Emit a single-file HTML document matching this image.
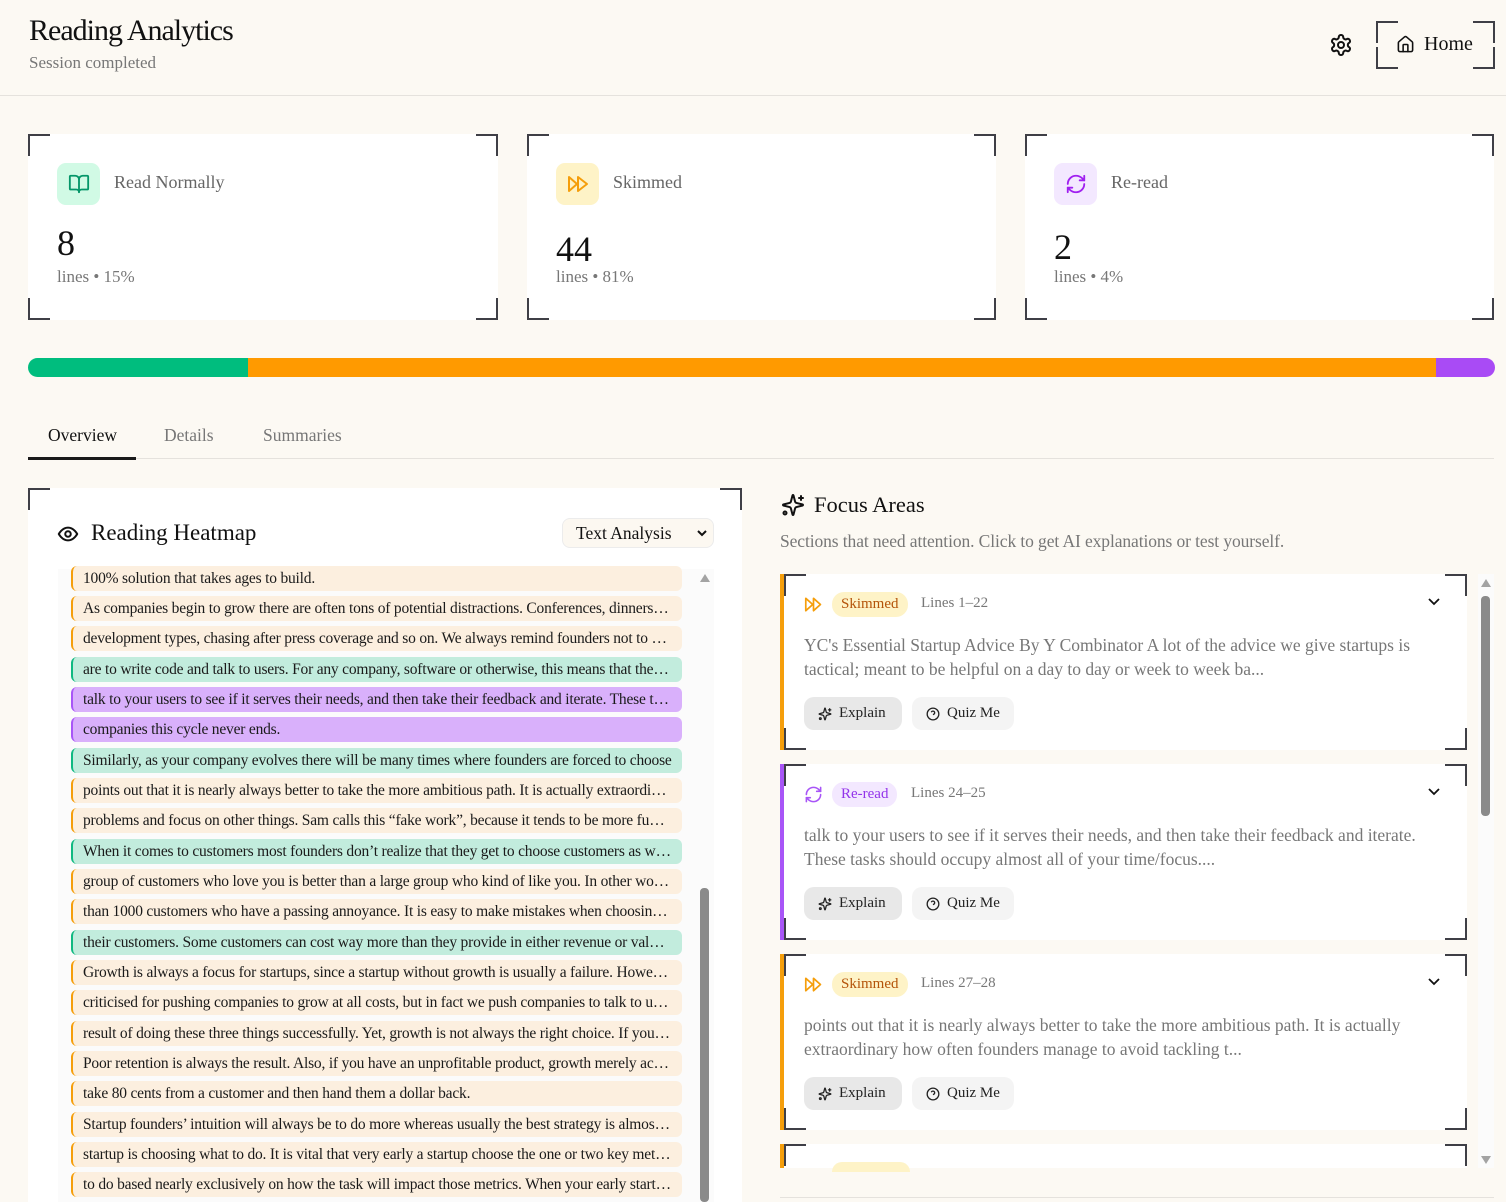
<!DOCTYPE html>
<html><head><meta charset="utf-8"><style>
*{box-sizing:border-box;margin:0;padding:0}
body{width:1506px;height:1202px;overflow:hidden;background:#fcf9f3;font-family:"Liberation Serif",serif;color:#1a1a1a;position:relative}
.abs{position:absolute}
.br{position:absolute;width:22px;height:22px;border-color:#3f3f46;border-style:solid;border-width:0}
.tl{left:0;top:0;border-left-width:2px;border-top-width:2px}
.tr{right:0;top:0;border-right-width:2px;border-top-width:2px}
.bl{left:0;bottom:0;border-left-width:2px;border-bottom-width:2px}
.brr{right:0;bottom:0;border-right-width:2px;border-bottom-width:2px}
.card{position:absolute;top:134px;height:186px;background:#fff}
.ib{position:absolute;left:29px;top:29px;width:43px;height:42px;border-radius:9px;display:flex;align-items:center;justify-content:center}
.cl{position:absolute;left:86px;top:38px;font-size:18px;color:#666}
.num{position:absolute;left:29px;top:88px;font-size:36px;color:#111}
.sub{position:absolute;left:29px;top:133px;font-size:17px;color:#777}
.row{position:absolute;left:71px;width:611px;height:25px;border-radius:6px;border-left:2px solid #f59e0b;background:#fcefdf;font-size:15.5px;line-height:25px;padding-left:10px;padding-right:10px;white-space:nowrap;overflow:hidden;text-overflow:ellipsis;color:#1a1a1a;letter-spacing:-0.2px}
.g{background:#c2ecdd;border-left-color:#10b981}
.p{background:#d9b0fb;border-left-color:#a855f7}
.fc{position:absolute;left:780px;width:687px;height:176px;background:#fff;border-left:4px solid #f59e0b}
.fc .in{position:absolute;left:20px;top:0;right:0;bottom:0}
.badge{position:absolute;left:28px;top:18px;height:25px;padding:0 9px;border-radius:12px;font-size:15px;line-height:25px}
.lines{position:absolute;top:21px;font-size:15px;color:#777}
.txt{position:absolute;left:0;top:59px;width:630px;font-size:17.5px;line-height:24px;color:#777}
.btn{position:absolute;top:123px;height:33px;border-radius:10px;font-size:15px;line-height:33px;padding-left:35px;color:#222}
.chev{position:absolute;right:27px;top:24px}
</style></head><body>

<div class="abs" style="left:29px;top:14px;font-size:30px;letter-spacing:-1px;color:#111">Reading Analytics</div>
<div class="abs" style="left:29px;top:53px;font-size:17px;color:#777">Session completed</div>
<svg class="abs" style="left:1329px;top:33px" width="24" height="24" viewBox="0 0 24 24" fill="none" stroke="#111" stroke-width="2" stroke-linecap="round" stroke-linejoin="round"><path d="M12.22 2h-.44a2 2 0 0 0-2 2v.18a2 2 0 0 1-1 1.73l-.43.25a2 2 0 0 1-2 0l-.15-.08a2 2 0 0 0-2.73.73l-.22.38a2 2 0 0 0 .73 2.73l.15.1a2 2 0 0 1 1 1.72v.51a2 2 0 0 1-1 1.740l-.15.09a2 2 0 0 0-.73 2.73l.22.38a2 2 0 0 0 2.73.73l.15-.08a2 2 0 0 1 2 0l.43.25a2 2 0 0 1 1 1.73V20a2 2 0 0 0 2 2h.44a2 2 0 0 0 2-2v-.18a2 2 0 0 1 1-1.73l.43-.25a2 2 0 0 1 2 0l.15.08a2 2 0 0 0 2.73-.73l.22-.39a2 2 0 0 0-.73-2.73l-.15-.08a2 2 0 0 1-1-1.74v-.5a2 2 0 0 1 1-1.74l.15-.09a2 2 0 0 0 .73-2.73l-.22-.38a2 2 0 0 0-2.73-.73l-.15.08a2 2 0 0 1-2 0l-.43-.25a2 2 0 0 1-1-1.73V4a2 2 0 0 0-2-2z"/><circle cx="12" cy="12" r="3"/></svg>
<div class="abs" style="left:1376px;top:21px;width:119px;height:48px">
<div class="br tl"></div><div class="br tr"></div><div class="br bl"></div><div class="br brr"></div>
<svg class="abs" style="left:20px;top:14px" width="19" height="19" viewBox="0 0 24 24" fill="none" stroke="#111" stroke-width="2" stroke-linecap="round" stroke-linejoin="round"><path d="M15 21v-8a1 1 0 0 0-1-1h-4a1 1 0 0 0-1 1v8"/><path d="M3 10a2 2 0 0 1 .709-1.528l7-5.999a2 2 0 0 1 2.582 0l7 5.999A2 2 0 0 1 21 10v9a2 2 0 0 1-2 2H5a2 2 0 0 1-2-2z"/></svg>
<div class="abs" style="left:48px;top:12px;font-size:20px;color:#111">Home</div>
</div>
<div class="abs" style="left:0;top:95px;width:1506px;height:1px;background:#e5e2dd"></div>

<div class="card" style="left:28px;width:470px"><div class="br tl"></div><div class="br tr"></div><div class="br bl"></div><div class="br brr"></div>
<div class="ib" style="background:#d1fae5"><svg width="22" height="22" viewBox="0 0 24 24" fill="none" stroke="#059669" stroke-width="2" stroke-linecap="round" stroke-linejoin="round"><path d="M12 7v14"/><path d="M3 18a1 1 0 0 1-1-1V4a1 1 0 0 1 1-1h5a4 4 0 0 1 4 4 4 4 0 0 1 4-4h5a1 1 0 0 1 1 1v13a1 1 0 0 1-1 1h-6a3 3 0 0 0-3 3 3 3 0 0 0-3-3z"/></svg></div>
<div class="cl">Read Normally</div><div class="num">8</div><div class="sub">lines • 15%</div></div>

<div class="card" style="left:527px;width:469px"><div class="br tl"></div><div class="br tr"></div><div class="br bl"></div><div class="br brr"></div>
<div class="ib" style="background:#fef3c7"><svg width="24" height="24" viewBox="0 0 24 24" fill="none" stroke="#f59e0b" stroke-width="2" stroke-linejoin="round"><path d="M3 5l8 7-8 7z"/><path d="M12 5l9 7-9 7z"/></svg></div>
<div class="cl">Skimmed</div><div class="num" style="top:94px">44</div><div class="sub">lines • 81%</div></div>

<div class="card" style="left:1025px;width:469px"><div class="br tl"></div><div class="br tr"></div><div class="br bl"></div><div class="br brr"></div>
<div class="ib" style="background:#f3e8ff"><svg width="22" height="22" viewBox="0 0 24 24" fill="none" stroke="#a020f0" stroke-width="2" stroke-linecap="round" stroke-linejoin="round"><path d="M3 12a9 9 0 0 1 9-9 9.75 9.75 0 0 1 6.74 2.74L21 8"/><path d="M21 3v5h-5"/><path d="M21 12a9 9 0 0 1-9 9 9.75 9.75 0 0 1-6.74-2.74L3 16"/><path d="M8 16H3v5"/></svg></div>
<div class="cl">Re-read</div><div class="num" style="top:92px">2</div><div class="sub">lines • 4%</div></div>

<div class="abs" style="left:28px;top:358px;width:1467px;height:19px;border-radius:10px;overflow:hidden;display:flex">
<div style="width:220px;background:#00bd7e"></div><div style="width:1188px;background:#ff9a00"></div><div style="flex:1;background:#a94bf5"></div></div>

<div class="abs" style="left:28px;top:458px;width:1466px;height:1px;background:#e5e2dd"></div>
<div class="abs" style="left:28px;top:457px;width:108px;height:3px;background:#1a1a1a"></div>
<div class="abs" style="left:48px;top:425px;font-size:17.5px;color:#111">Overview</div>
<div class="abs" style="left:164px;top:425px;font-size:17.5px;color:#777">Details</div>
<div class="abs" style="left:263px;top:425px;font-size:17.5px;color:#777">Summaries</div>

<div class="abs" style="left:28px;top:488px;width:714px;height:714px;background:#fff">
<div class="br tl"></div><div class="br tr"></div>
<svg class="abs" style="left:29px;top:35px" width="22" height="22" viewBox="0 0 24 24" fill="none" stroke="#111" stroke-width="2.2"><path d="M2 12s3.5-7 10-7 10 7 10 7-3.5 7-10 7S2 12 2 12z"/><circle cx="12" cy="12" r="3"/></svg>
<div class="abs" style="left:63px;top:32px;font-size:23px;color:#111">Reading Heatmap</div>
<div class="abs" style="left:534px;top:30px;width:152px;height:30px;border:1px solid #ececec;border-radius:8px;background:#fcf8f1;font-size:17.5px;line-height:28px;padding-left:13px;color:#111">Text Analysis
<svg class="abs" style="right:6px;top:10px" width="10" height="8" viewBox="0 0 10 8"><path d="M1 2l4 4 4-4" stroke="#111" stroke-width="2" fill="none"/></svg></div>
<div class="abs" style="left:30px;top:81px;width:656px;height:633px;background:#fbfbfb"></div>
<div class="abs" style="left:672px;top:400px;width:9px;height:314px;background:#8a8a8a;border-radius:4px"></div>
<svg class="abs" style="left:672px;top:86px" width="10" height="8"><path d="M0 8L5 0 10 8z" fill="#a3a3a3"/></svg>
</div>

<div class="row" style="top:566px">100% solution that takes ages to build.</div>
<div class="row" style="top:596px">As companies begin to grow there are often tons of potential distractions. Conferences, dinners, networking</div>
<div class="row" style="top:626px">development types, chasing after press coverage and so on. We always remind founders not to get distracted</div>
<div class="row g" style="top:657px">are to write code and talk to users. For any company, software or otherwise, this means that the founders</div>
<div class="row p" style="top:687px">talk to your users to see if it serves their needs, and then take their feedback and iterate. These tasks</div>
<div class="row p" style="top:717px">companies this cycle never ends.</div>
<div class="row g" style="top:748px">Similarly, as your company evolves there will be many times where founders are forced to choose</div>
<div class="row" style="top:778px">points out that it is nearly always better to take the more ambitious path. It is actually extraordinary how</div>
<div class="row" style="top:808px">problems and focus on other things. Sam calls this “fake work”, because it tends to be more fun than</div>
<div class="row g" style="top:839px">When it comes to customers most founders don’t realize that they get to choose customers as well as</div>
<div class="row" style="top:869px">group of customers who love you is better than a large group who kind of like you. In other words, it</div>
<div class="row" style="top:899px">than 1000 customers who have a passing annoyance. It is easy to make mistakes when choosing your</div>
<div class="row g" style="top:930px">their customers. Some customers can cost way more than they provide in either revenue or value to</div>
<div class="row" style="top:960px">Growth is always a focus for startups, since a startup without growth is usually a failure. However growth</div>
<div class="row" style="top:990px">criticised for pushing companies to grow at all costs, but in fact we push companies to talk to users first</div>
<div class="row" style="top:1021px">result of doing these three things successfully. Yet, growth is not always the right choice. If you have a</div>
<div class="row" style="top:1051px">Poor retention is always the result. Also, if you have an unprofitable product, growth merely accelerates</div>
<div class="row" style="top:1081px">take 80 cents from a customer and then hand them a dollar back.</div>
<div class="row" style="top:1112px">Startup founders’ intuition will always be to do more whereas usually the best strategy is almost always</div>
<div class="row" style="top:1142px">startup is choosing what to do. It is vital that very early a startup choose the one or two key metrics it</div>
<div class="row" style="top:1172px">to do based nearly exclusively on how the task will impact those metrics. When your early startup is</div>

<svg class="abs" style="left:781px;top:493px" width="24" height="24" viewBox="0 0 24 24" fill="none" stroke="#111" stroke-width="2" stroke-linecap="round" stroke-linejoin="round"><path d="M9.937 15.5A2 2 0 0 0 8.5 14.063l-6.135-1.582a.5.5 0 0 1 0-.962L8.5 9.936A2 2 0 0 0 9.937 8.5l1.582-6.135a.5.5 0 0 1 .963 0L14.063 8.5A2 2 0 0 0 15.5 9.937l6.135 1.581a.5.5 0 0 1 0 .964L15.5 14.063a2 2 0 0 0-1.437 1.437l-1.582 6.135a.5.5 0 0 1-.963 0z"/><path d="M20 3v4"/><path d="M22 5h-4"/><circle cx="4" cy="20" r="1.5"/></svg>
<div class="abs" style="left:814px;top:492px;font-size:22.5px;color:#111">Focus Areas</div>
<div class="abs" style="left:780px;top:531px;font-size:17.5px;color:#777;letter-spacing:-0.1px">Sections that need attention. Click to get AI explanations or test yourself.</div>

<div class="abs" style="left:780px;top:574px;width:714px;height:594px;overflow:hidden">
<div class="abs" style="left:698px;top:0;width:16px;height:594px;background:#fbfbfb"></div>
<svg class="abs" style="left:701px;top:5px" width="10" height="8"><path d="M0 8L5 0 10 8z" fill="#a3a3a3"/></svg>
<svg class="abs" style="left:701px;top:582px" width="10" height="8"><path d="M0 0L5 8 10 0z" fill="#a3a3a3"/></svg>
<div class="abs" style="left:701px;top:22px;width:9px;height:220px;background:#8a8a8a;border-radius:4px"></div>
</div>

<div class="fc" style="top:574px"><div class="br tl"></div><div class="br tr"></div><div class="br bl"></div><div class="br brr"></div><div class="in">
<svg class="abs" style="left:0;top:22px" width="19" height="17" viewBox="0 0 24 22" fill="none" stroke="#f59e0b" stroke-width="2.2" stroke-linejoin="round"><path d="M2 3l9 8-9 8z"/><path d="M12 3l9 8-9 8z"/></svg>
<div class="badge" style="background:#fef3c7;color:#b45309">Skimmed</div><div class="lines" style="left:117px">Lines 1–22</div>
<svg class="chev" width="12" height="8" viewBox="0 0 12 8"><path d="M1 1l5 5 5-5" stroke="#111" stroke-width="1.8" fill="none"/></svg>
<div class="txt">YC's Essential Startup Advice By Y Combinator A lot of the advice we give startups is tactical; meant to be helpful on a day to day or week to week ba...</div>
<div class="btn" style="left:0;width:98px;background:#e8e8e8">Explain</div><div class="btn" style="left:108px;width:102px;background:#f4f4f4">Quiz Me</div>
<svg class="abs" style="left:14px;top:133px" width="14" height="14" viewBox="0 0 24 24" fill="none" stroke="#222" stroke-width="2.2" stroke-linecap="round" stroke-linejoin="round"><path d="M9.937 15.5A2 2 0 0 0 8.5 14.063l-6.135-1.582a.5.5 0 0 1 0-.962L8.5 9.936A2 2 0 0 0 9.937 8.5l1.582-6.135a.5.5 0 0 1 .963 0L14.063 8.5A2 2 0 0 0 15.5 9.937l6.135 1.581a.5.5 0 0 1 0 .964L15.5 14.063a2 2 0 0 0-1.437 1.437l-1.582 6.135a.5.5 0 0 1-.963 0z"/><path d="M20 3v4"/><path d="M22 5h-4"/><circle cx="4" cy="20" r="1.5"/></svg>
<svg class="abs" style="left:122px;top:133px" width="14" height="14" viewBox="0 0 24 24" fill="none" stroke="#222" stroke-width="2.2"><circle cx="12" cy="12" r="10"/><path d="M9.1 9a3 3 0 0 1 5.8 1c0 2-3 3-3 3"/><path d="M12 17h.01"/></svg>
</div></div>

<div class="fc" style="top:764px;border-left-color:#a855f7"><div class="br tl"></div><div class="br tr"></div><div class="br bl"></div><div class="br brr"></div><div class="in">
<svg class="abs" style="left:0;top:21px" width="19" height="19" viewBox="0 0 24 24" fill="none" stroke="#a855f7" stroke-width="2" stroke-linecap="round" stroke-linejoin="round"><path d="M3 12a9 9 0 0 1 9-9 9.75 9.75 0 0 1 6.74 2.74L21 8"/><path d="M21 3v5h-5"/><path d="M21 12a9 9 0 0 1-9 9 9.75 9.75 0 0 1-6.74-2.74L3 16"/><path d="M8 16H3v5"/></svg>
<div class="badge" style="background:#f3e8ff;color:#9333ea">Re-read</div><div class="lines" style="left:107px">Lines 24–25</div>
<svg class="chev" width="12" height="8" viewBox="0 0 12 8"><path d="M1 1l5 5 5-5" stroke="#111" stroke-width="1.8" fill="none"/></svg>
<div class="txt" style="width:650px">talk to your users to see if it serves their needs, and then take their feedback and iterate. These tasks should occupy almost all of your time/focus....</div>
<div class="btn" style="left:0;width:98px;background:#e8e8e8">Explain</div><div class="btn" style="left:108px;width:102px;background:#f4f4f4">Quiz Me</div>
<svg class="abs" style="left:14px;top:133px" width="14" height="14" viewBox="0 0 24 24" fill="none" stroke="#222" stroke-width="2.2" stroke-linecap="round" stroke-linejoin="round"><path d="M9.937 15.5A2 2 0 0 0 8.5 14.063l-6.135-1.582a.5.5 0 0 1 0-.962L8.5 9.936A2 2 0 0 0 9.937 8.5l1.582-6.135a.5.5 0 0 1 .963 0L14.063 8.5A2 2 0 0 0 15.5 9.937l6.135 1.581a.5.5 0 0 1 0 .964L15.5 14.063a2 2 0 0 0-1.437 1.437l-1.582 6.135a.5.5 0 0 1-.963 0z"/><path d="M20 3v4"/><path d="M22 5h-4"/><circle cx="4" cy="20" r="1.5"/></svg>
<svg class="abs" style="left:122px;top:133px" width="14" height="14" viewBox="0 0 24 24" fill="none" stroke="#222" stroke-width="2.2"><circle cx="12" cy="12" r="10"/><path d="M9.1 9a3 3 0 0 1 5.8 1c0 2-3 3-3 3"/><path d="M12 17h.01"/></svg>
</div></div>

<div class="fc" style="top:954px"><div class="br tl"></div><div class="br tr"></div><div class="br bl"></div><div class="br brr"></div><div class="in">
<svg class="abs" style="left:0;top:22px" width="19" height="17" viewBox="0 0 24 22" fill="none" stroke="#f59e0b" stroke-width="2.2" stroke-linejoin="round"><path d="M2 3l9 8-9 8z"/><path d="M12 3l9 8-9 8z"/></svg>
<div class="badge" style="background:#fef3c7;color:#b45309">Skimmed</div><div class="lines" style="left:117px">Lines 27–28</div>
<svg class="chev" width="12" height="8" viewBox="0 0 12 8"><path d="M1 1l5 5 5-5" stroke="#111" stroke-width="1.8" fill="none"/></svg>
<div class="txt">points out that it is nearly always better to take the more ambitious path. It is actually extraordinary how often founders manage to avoid tackling t...</div>
<div class="btn" style="left:0;width:98px;background:#e8e8e8">Explain</div><div class="btn" style="left:108px;width:102px;background:#f4f4f4">Quiz Me</div>
<svg class="abs" style="left:14px;top:133px" width="14" height="14" viewBox="0 0 24 24" fill="none" stroke="#222" stroke-width="2.2" stroke-linecap="round" stroke-linejoin="round"><path d="M9.937 15.5A2 2 0 0 0 8.5 14.063l-6.135-1.582a.5.5 0 0 1 0-.962L8.5 9.936A2 2 0 0 0 9.937 8.5l1.582-6.135a.5.5 0 0 1 .963 0L14.063 8.5A2 2 0 0 0 15.5 9.937l6.135 1.581a.5.5 0 0 1 0 .964L15.5 14.063a2 2 0 0 0-1.437 1.437l-1.582 6.135a.5.5 0 0 1-.963 0z"/><path d="M20 3v4"/><path d="M22 5h-4"/><circle cx="4" cy="20" r="1.5"/></svg>
<svg class="abs" style="left:122px;top:133px" width="14" height="14" viewBox="0 0 24 24" fill="none" stroke="#222" stroke-width="2.2"><circle cx="12" cy="12" r="10"/><path d="M9.1 9a3 3 0 0 1 5.8 1c0 2-3 3-3 3"/><path d="M12 17h.01"/></svg>
</div></div>

<div class="fc" style="top:1144px;height:24px"><div class="br tl"></div><div class="br tr"></div>
<div class="abs" style="left:48px;top:18px;width:78px;height:10px;background:#fef3c7;border-radius:12px 12px 0 0"></div></div>

<div class="abs" style="left:780px;top:1197px;width:714px;height:1px;background:#e5e2dd"></div>
</body></html>
